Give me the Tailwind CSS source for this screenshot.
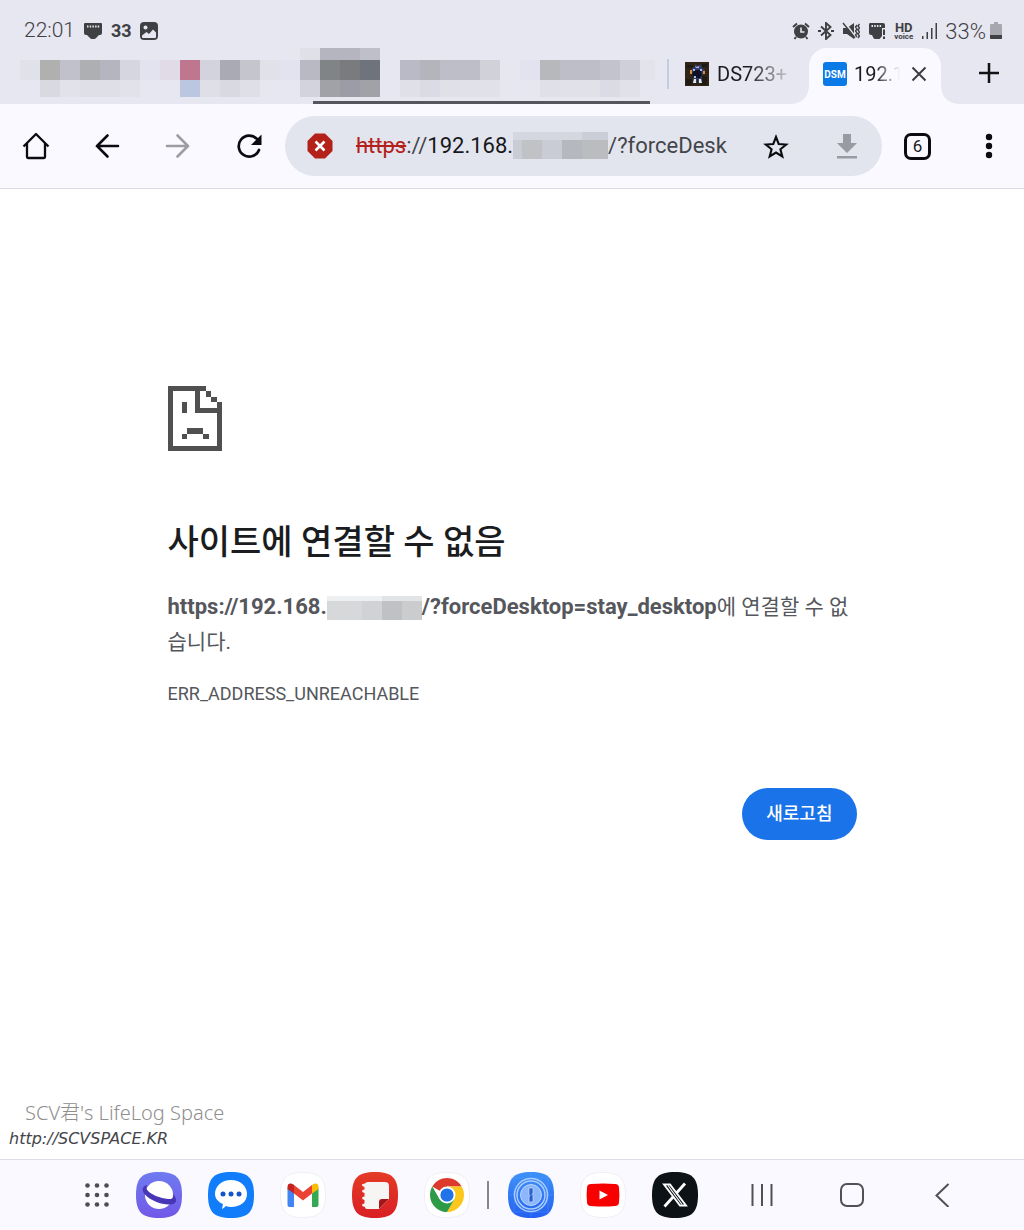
<!doctype html>
<html lang="ko">
<head>
  <meta charset="UTF-8" />
  <meta name="viewport" content="width=device-width, initial-scale=1" />
  <script src="https://cdn.jsdelivr.net/npm/@tailwindcss/browser@4"></script>
  <title>사이트에 연결할 수 없음</title>
</head>
<body class="min-h-screen flex flex-col bg-white text-[#1b1c20] font-[Roboto,'Noto_Sans_CJK_KR',sans-serif]">

  <!-- Status bar -->
  <div class="h-12 pt-[14px] pl-6 pr-[22px] flex items-center justify-between bg-[#e6e7f0] text-[#3f4043]">
    <div class="flex items-center gap-2">
      <span class="text-[21px] font-light">22:01</span>
      <svg class="w-5 h-5" viewBox="0 0 20 20" fill="currentColor"><path fill-rule="evenodd" d="M2 2h16a1 1 0 0 1 1 1v9q0 2-2 2h-1l-3 3q-.600 1-2 1H9q-1.400 0-2-1l-3-3H3q-2 0-2-2V3a1 1 0 0 1 1-1Zm2 2.500v2h1.500v-2Zm2.700 0v2h1.500v-2Zm2.700 0v2h1.500v-2Zm2.700 0v2h1.500v-2Zm2.600 0v2h1.500v-2Z"/></svg>
      <span class="text-lg leading-5 font-bold">33</span>
      <svg class="w-[18px] h-[18px]" viewBox="0 0 18 18"><rect width="18" height="18" rx="4" fill="currentColor"/><circle cx="5.500" cy="5.500" r="2" fill="#e6e7f0"/><path d="M2 13.500 6.500 10l2.500 2 4-4.500 3 3V15q0 1-1 1H3q-1 0-1-1Z" fill="#e6e7f0"/></svg>
    </div>
    <div class="flex items-center gap-2">
      <!-- alarm -->
      <svg class="w-[18px] h-[18px]" viewBox="0 0 18 18"><circle cx="9" cy="9.500" r="7" fill="currentColor"/><path d="M1 5 5 1.500M17 5l-4-3.500M4 15l-1.500 2M14 15l1.500 2" stroke="currentColor" stroke-width="2"/><path d="M9 5.500V10h3.500" fill="none" stroke="#e6e7f0" stroke-width="1.600"/></svg>
      <!-- bluetooth -->
      <svg class="w-4 h-[18px]" viewBox="0 0 16 18" fill="none" stroke="currentColor" stroke-width="1.900"><path d="m3 4.500 9.500 8.500L8 17V1l4.500 4L3 13.500"/><path d="M0 9h3M13 9h3" stroke-width="2.200"/></svg>
      <!-- muted -->
      <svg class="w-[18px] h-[18px]" viewBox="0 0 18 18"><path d="M1 6h4l7-5v16l-7-5H1Z" fill="currentColor"/><path d="M2.500 0 14 15.500" stroke="#e6e7f0" stroke-width="1.600"/><path d="m1 1 12 15M15 3l-1.500 2L15 7l-1.500 2 1.500 2-1.500 2 1.500 2M17.500 2 16 4l1.500 2L16 8l1.500 2-1.500 2 1.500 2-1.500 2" fill="none" stroke="currentColor" stroke-width="1.400"/></svg>
      <!-- ethernet -->
      <svg class="w-[18px] h-[18px]" viewBox="0 0 18 18" fill="currentColor"><path fill-rule="evenodd" d="M2 1h13q2 0 2 2v3h-3v8l-2 2.500q-.500.500-1 .500H7q-1 0-1.500-1L4 13H3q-2 0-2-2V2.500Q1 1 2 1Zm1.500 2v2H5V3Zm2.700 0v2h1.500V3Zm2.700 0v2h1.500V3Zm2.700 0v2h1.500V3Z"/><path d="M15 7.500h2V13h-2zM15 14.500h2V17h-2z"/></svg>
      <div class="flex flex-col items-center font-bold">
        <span class="text-[13px] leading-[11px]">HD</span>
        <span class="text-[8px] leading-[7px]">voice</span>
      </div>
      <div class="flex items-center gap-1">
        <svg class="w-5 h-[18px]" viewBox="0 0 20 18" fill="currentColor"><path d="M1 14h1.500v3H1zM5.500 10H7v7H5.500zM10 6h1.500v11H10zM14.500 1H16v16h-1.500z"/></svg>
        <span class="text-[22px] font-light">33%</span>
        <svg class="w-3 h-[18px]" viewBox="0 0 12 18"><path d="M4 0h4v2h3q1 0 1 1v13q0 1-1 1H1q-1 0-1-1V3q0-1 1-1h3Z" fill="#a7a7af"/><path d="M0 13h12v3q0 1-1 1H1q-1 0-1-1Z" fill="#3f4043"/></svg>
      </div>
    </div>
  </div>

  <!-- Tab strip -->
  <div class="h-14 flex bg-[#e6e7f0] overflow-hidden">
    <!-- masked tabs -->
    <svg class="flex-none w-[667px] h-14" viewBox="0 0 667 56" shape-rendering="crispEdges">
      <path fill="#e1e2e9" d="M20 12h20v20H20zM260 12h20v20h-20z"/>
      <path fill="#b0b1ae" d="M40 12h20v20H40z"/>
      <path fill="#c1c1cb" d="M60 12h20v20H60z"/>
      <path fill="#adafb3" d="M80 12h20v20H80z"/>
      <path fill="#b4b5bf" d="M100 12h20v20h-20z"/>
      <path fill="#d5d6df" d="M120 12h20v20h-20z"/>
      <path fill="#e2e3ee" d="M140 12h20v20h-20zM280 12h20v20h-20zM520 12h20v20h-20z"/>
      <path fill="#e1dbe7" d="M160 12h20v20h-20z"/>
      <path fill="#bf768f" d="M180 12h20v20h-20z"/>
      <path fill="#d2d3dc" d="M200 12h20v20h-20z"/>
      <path fill="#a9aab3" d="M220 12h20v20h-20z"/>
      <path fill="#c5c6cd" d="M240 12h20v20h-20z"/>
      <path fill="#d9dae1" d="M40 32h20v17H40zM220 32h20v17h-20z"/>
      <path fill="#dfdfe7" d="M80 32h40v17H80zM200 32h20v17h-20zM240 32h20v17h-20z"/>
      <path fill="#e2e2ea" d="M60 32h20v17H60zM120 32h20v17h-20z"/>
      <path fill="#bbc7e1" d="M180 32h20v17h-20z"/>
      <path fill="#dfe0e8" d="M300 0h20v12h-20z"/>
      <path fill="#b4b5be" d="M320 0h40v12h-40z"/>
      <path fill="#bebfc9" d="M360 0h20v12h-20z"/>
      <path fill="#b8b9c3" d="M300 12h20v20h-20z"/>
      <path fill="#808487" d="M320 12h20v20h-20z"/>
      <path fill="#7a7b7f" d="M340 12h20v20h-20z"/>
      <path fill="#6f737b" d="M360 12h20v20h-20z"/>
      <path fill="#d2d3dd" d="M300 32h20v17h-20z"/>
      <path fill="#a1a1a8" d="M320 32h20v17h-20zM360 32h20v17h-20z"/>
      <path fill="#9c9ca7" d="M340 32h20v17h-20z"/>
      <path fill="#babac6" d="M400 12h20v20h-20z"/>
      <path fill="#b3b4bc" d="M420 12h20v20h-20z"/>
      <path fill="#bdbec8" d="M440 12h40v20h-40zM560 12h40v20h-40z"/>
      <path fill="#d1d2d9" d="M480 12h20v20h-20z"/>
      <path fill="#dfe0e8" d="M400 32h20v17h-20zM440 32h20v17h-20zM540 32h20v17h-20z"/>
      <path fill="#dadbe4" d="M420 32h20v17h-20zM600 32h20v17h-20z"/>
      <path fill="#e1e2e9" d="M460 32h40v17h-40zM560 32h40v17h-40zM620 32h20v17h-20z"/>
      <path fill="#b7b8bc" d="M540 12h20v20h-20z"/>
      <path fill="#c2c3cd" d="M600 12h20v20h-20z"/>
      <path fill="#cecfd8" d="M620 12h20v20h-20z"/>
      <path fill="#e3e4eb" d="M640 12h15v20h-15z"/>
      <path fill="#55565d" d="M313 53h337v3H313z"/>
    </svg>
    <button class="flex-none w-[142px] h-[52px] flex items-center text-left">
      <span class="flex-none w-[2px] h-[30px] bg-[#c3cde0]"></span>
      <svg class="ml-4 flex-none w-6 h-6" viewBox="0 0 24 24"><path fill="#302416" d="M0 0h24v24H0z"/><path fill="#201b12" d="M2 3h6v3H2zM16 14h6v9h-6zM1 17h6v6H1zM17 2h5v3h-5z"/><path fill="#303e68" d="m10 2 3 2 3-2 1 4 3 2v4l-3 1v8h-4v-4h-1v4H8v-7l-2-3 1-5 3-1Z"/><path fill="#0e1127" d="M9 8h7l1 5-2 3H9l-2-4Z"/><path fill="#a9b9e3" d="m10 4 2 1 2-1v2h-3ZM8 7h2v2H8zM15 7h2v2h-2zM9 14h2v2H9z"/><path fill="#e7e8ef" d="M9 17h2v4H8zM14 17h2l1 4h-3z"/><path fill="#e18a36" d="M5 8h2v4H5zM18 9h2v3h-2z"/></svg>
      <span class="ml-2 w-[70px] overflow-hidden whitespace-nowrap text-[20px] [mask-image:linear-gradient(to_right,black_45%,transparent_110%)]">DS723+</span>
    </button>
    <div class="relative flex-none w-[132px] h-14 pb-1 pl-[14px] pr-[13px] flex items-center rounded-t-[18px] bg-[#faf9ff]">
      <svg class="absolute -left-5 bottom-0 w-5 h-5" viewBox="0 0 20 20"><path d="M0 20Q20 20 20 0v20Z" fill="#faf9ff"/></svg>
      <svg class="absolute -right-5 bottom-0 w-5 h-5" viewBox="0 0 20 20"><path d="M20 20Q0 20 0 0v20Z" fill="#faf9ff"/></svg>
      <span class="flex-none w-6 h-6 rounded-[3px] bg-[#0a7ae6] text-white text-[10px] font-bold flex items-center justify-center">DSM</span>
      <span class="ml-[7px] w-[46px] overflow-hidden whitespace-nowrap text-[20px] [mask-image:linear-gradient(to_right,black_45%,transparent)]">192.16</span>
      <button class="ml-auto" aria-label="탭 닫기">
        <svg class="w-[18px] h-[18px]" viewBox="0 0 18 18" stroke="#3c3d42" stroke-width="2"><path d="m2.500 2.500 13 13M15.500 2.500l-13 13"/></svg>
      </button>
    </div>
    <button class="ml-auto w-[71px] h-[50px] flex items-center justify-center" aria-label="새 탭">
      <svg class="w-5 h-5" viewBox="0 0 20 20" stroke="#111215" stroke-width="2.500"><path d="M10 0v20M0 10h20"/></svg>
    </button>
  </div>

  <!-- Toolbar -->
  <header class="h-[85px] flex items-center bg-[#faf9ff] border-b border-[#dcdce4]">
    <button class="flex-none w-[71px] flex justify-center" aria-label="홈">
      <svg class="w-7 h-7" viewBox="0 0 28 28" fill="none" stroke="#0b0c0f" stroke-width="2.300" stroke-linejoin="round"><path d="M1.500 14.500 14 2l12.500 12.500M5 11.500V25q0 1 1 1h16q1 0 1-1V11.500"/></svg>
    </button>
    <button class="flex-none w-[71px] flex justify-center" aria-label="뒤로">
      <svg class="w-7 h-7" viewBox="0 0 28 28" fill="none" stroke="#0b0c0f" stroke-width="2.600" stroke-linecap="round"><path d="M25 14H4M14.500 3.500 4 14l10.500 10.500"/></svg>
    </button>
    <button class="flex-none w-[71px] flex justify-center" aria-label="앞으로">
      <svg class="w-7 h-7" viewBox="0 0 28 28" fill="none" stroke="#9c9ca1" stroke-width="2.600" stroke-linecap="round"><path d="M3 14h21M13.500 3.500 24 14 13.500 24.500"/></svg>
    </button>
    <button class="flex-none w-[71px] flex justify-center" aria-label="새로고침">
      <svg class="w-7 h-7" viewBox="0 0 28 28"><path d="M24 18A10.500 10.500 0 1 1 22 7" fill="none" stroke="#0b0c0f" stroke-width="2.700" stroke-linecap="round"/><path d="M26.500 2.500V13H16Z" fill="#0b0c0f"/></svg>
    </button>
    <div class="flex-1 min-w-0 h-[60px] ml-px pl-[22px] flex items-center rounded-full bg-[#e2e5ee]">
      <svg class="flex-none w-[26px] h-[26px]" viewBox="0 0 26 26"><path d="M8 .500h10L25.500 8v10L18 25.500H8L.500 18V8Z" fill="#b3211a"/><path d="m8.500 8.500 9 9M17.500 8.500l-9 9" stroke="#fff" stroke-width="2.600"/></svg>
      <div role="textbox" aria-label="주소" contenteditable="true" class="flex-1 min-w-0 ml-[23px] mr-3 flex items-center overflow-hidden whitespace-nowrap text-[22px] leading-8 text-[#43454b]"><s class="text-[#b3211a]">https</s><span>://</span><span class="text-[#17181b]">192.168.</span><svg class="flex-none w-[95px] h-8" viewBox="0 0 95 32" shape-rendering="crispEdges"><path fill="#d4d7df" d="M0 2h69v8H0z"/><path fill="#cbced6" d="M69 2h26v8H69z"/><path fill="#c9ccd4" d="M0 10h9v19H0zM29 10h20v19H29z"/><path fill="#c1c2c5" d="M9 10h20v19H9z"/><path fill="#b6b8bf" d="M49 10h20v19H49z"/><path fill="#bbbcc0" d="M69 10h26v19H69z"/></svg><span>/?forceDesk</span></div>
      <button class="flex-none w-[71px] flex justify-center" aria-label="북마크">
        <svg class="w-7 h-7" viewBox="0 0 28 28" fill="none" stroke="#0b0c0f" stroke-width="2.100"><path d="m14 5 2.700 7 7.500.500-5.800 4.800 1.900 7.200-6.300-4-6.300 4 1.900-7.200-5.800-4.800 7.500-.500Z"/></svg>
      </button>
      <button class="flex-none w-[71px] flex justify-center" aria-label="다운로드">
        <svg class="w-7 h-7" viewBox="0 0 28 28" fill="#989ba2"><path d="M10 2h8v9h6l-10 10L4 11h6ZM4 24h20v2.500H4z"/></svg>
      </button>
    </div>
    <button class="flex-none w-[71px] flex justify-center" aria-label="탭 6개">
      <span class="w-[27px] h-[27px] rounded-[7px] border-[3px] border-[#0b0c0f] flex items-center justify-center text-[17px] leading-5">6</span>
    </button>
    <button class="flex-none w-[71px] flex justify-center" aria-label="메뉴">
      <svg class="w-7 h-7" viewBox="0 0 28 28" fill="#0b0c0f"><circle cx="14" cy="5" r="3.200"/><circle cx="14" cy="14" r="3.200"/><circle cx="14" cy="23" r="3.200"/></svg>
    </button>
  </header>

  <!-- Error page -->
  <main class="flex-1 flex flex-col justify-between">
    <div class="w-full max-w-[689px] mx-auto pt-[197px]">
      <svg class="w-[54px] h-[65px]" viewBox="0 0 10 12" preserveAspectRatio="none" fill="#505050" shape-rendering="crispEdges"><path d="M0 0h7v1h1v1h1v1h1v9H0ZM1 1v10h8V5H5V1ZM6 1v3h3V3H8V2H7V1ZM2.500 3h1v2h-1zM3.500 7.800h3v1h-3zM2.500 8.800h1v1h-1zM6.500 8.800h1v1h-1z" fill-rule="evenodd"/></svg>
      <h1 class="mt-[67px] text-[34px] leading-[48px] font-medium text-[#1b1c20]">사이트에 연결할 수 없음</h1>
      <p class="mt-[23px] text-[21px] leading-[35px] text-[#55575c]"><strong class="text-[22px] font-bold">https://192.168.</strong><svg class="inline-block align-middle w-[95px] h-6" viewBox="0 0 95 24" shape-rendering="crispEdges"><path fill="#eeeff0" d="M0 0h55v5H0z"/><path fill="#e3e4e6" d="M55 0h40v5H55z"/><path fill="#d6d8da" d="M0 5h35v19H0z"/><path fill="#d0d2d5" d="M35 5h20v19H35z"/><path fill="#c0c1c4" d="M55 5h20v19H55z"/><path fill="#caccce" d="M75 5h20v19H75z"/></svg><strong class="text-[22px] font-bold">/?forceDesktop=stay_desktop</strong>에 연결할 수 없습니다.</p>
      <p class="mt-[22px] text-lg leading-6 text-[#55575c]">ERR_ADDRESS_UNREACHABLE</p>
      <div class="mt-[82px] flex justify-end">
        <button class="h-[52px] px-6 rounded-full bg-[#1a73e8] text-white text-lg font-medium">새로고침</button>
      </div>
    </div>
    <div class="pl-[9px] pb-2">
      <div class="pl-4 text-[20px] leading-7 text-[#8f8f8f] font-['Noto_Sans','Noto_Sans_CJK_KR',sans-serif] font-light">SCV君's LifeLog Space</div>
      <a href="http://SCVSPACE.KR" class="block text-base leading-6 italic font-extralight text-[#44454a] font-['DejaVu_Sans',sans-serif]">http://SCVSPACE.KR</a>
    </div>
  </main>

  <!-- Taskbar -->
  <footer class="h-[71px] pl-[84px] flex items-center border-t border-[#dcdce6] bg-[#faf9ff]">
    <button class="flex-none" aria-label="앱 목록">
      <svg class="w-[26px] h-[26px]" viewBox="0 0 26 26" fill="#4d4e52"><circle cx="3.500" cy="3.500" r="2.300"/><circle cx="13" cy="3.500" r="2.300"/><circle cx="22.500" cy="3.500" r="2.300"/><circle cx="3.500" cy="13" r="2.300"/><circle cx="13" cy="13" r="2.300"/><circle cx="22.500" cy="13" r="2.300"/><circle cx="3.500" cy="22.500" r="2.300"/><circle cx="13" cy="22.500" r="2.300"/><circle cx="22.500" cy="22.500" r="2.300"/></svg>
    </button>
    <div class="ml-[26px] flex gap-[26px]">
      <button aria-label="삼성 인터넷">
        <svg class="w-[46px] h-[46px]" viewBox="0 0 46 46"><defs><linearGradient id="si" x2="0" y2="1"><stop stop-color="#6f7bf0"/><stop offset="1" stop-color="#7158e8"/></linearGradient></defs><path d="M0 23C0 6 6 0 23 0s23 6 23 23-6 23-23 23S0 40 0 23Z" fill="url(#si)"/><circle cx="23" cy="23" r="14" fill="#fff"/><path d="M11 13c-6 2-5 6-2 9.500C15 29 26 33 34 32.500c7-.500 8-5 3-10.500 1 4-1 5.500-5 5-8-1-16-4-20-8-2-2-2-4-1-6Z" fill="#4936b6"/></svg>
      </button>
      <button aria-label="메시지">
        <svg class="w-[46px] h-[46px]" viewBox="0 0 46 46"><path d="M0 23C0 6 6 0 23 0s23 6 23 23-6 23-23 23S0 40 0 23Z" fill="#127dfa"/><path d="M23 8c9 0 16 6 16 14s-7 13-16 13q-3 0-5-1-2 2-4 3l1-5c-5-2-8-6-8-10C7 14 14 8 23 8Z" fill="#fff"/><g fill="#1554c9"><circle cx="15" cy="22" r="2.500"/><circle cx="23" cy="22" r="2.500"/><circle cx="31" cy="22" r="2.500"/></g></svg>
      </button>
      <button aria-label="Gmail">
        <svg class="w-[46px] h-[46px]" viewBox="0 0 46 46"><path d="M.5 23C.5 6.500 6.500.5 23 .5S45.500 6.500 45.500 23 39.500 45.500 23 45.500.5 39.500.5 23Z" fill="#fff" stroke="#efeff3"/><path d="M7.500 16v17q0 2 2 2H14V20Z" fill="#4285f4"/><path d="M38.500 16v17q0 2-2 2H32V20Z" fill="#34a853"/><path d="m14 13 9 7 9-7v8.500l-9 7-9-7Z" fill="#ea4335"/><path d="M7.500 17v-2c0-4 3.500-4.500 6.500-2v8.500L7.500 17Z" fill="#c5221f"/><path d="M38.500 17v-2c0-4-3.500-4.500-6.500-2v8.500l6.500-4.500Z" fill="#fbbc04"/></svg>
      </button>
      <button aria-label="삼성 노트">
        <svg class="w-[46px] h-[46px]" viewBox="0 0 46 46"><defs><linearGradient id="sn" x2="0" y2="1"><stop stop-color="#e43b26"/><stop offset="1" stop-color="#d91f25"/></linearGradient></defs><path d="M0 23C0 6 6 0 23 0s23 6 23 23-6 23-23 23S0 40 0 23Z" fill="url(#sn)"/><path d="M16 10h17q4 0 4 4v13l-10 10H16q-3 0-3-2-3-.500-3-2t2.500-1.500V28Q10 27.500 10 26t2.500-1.500V21Q10 20.500 10 19t2.500-1.500V15Q10 14.500 10 13t3-1.500Q13.500 10 16 10Z" fill="#f7f5f3"/><path d="M27 37V30q0-3 3-3h7Z" fill="#a5161b"/></svg>
      </button>
      <button aria-label="Chrome">
        <svg class="w-[46px] h-[46px]" viewBox="0 0 46 46"><path d="M.5 23C.5 6.500 6.500.5 23 .5S45.500 6.500 45.500 23 39.500 45.500 23 45.500.5 39.500.5 23Z" fill="#fff" stroke="#efeff3"/><path d="M23 23 8.300 14.500A17 17 0 0 1 37.700 14.500H23Z" fill="#db3a2c"/><path d="M23 14.500h14.700A17 17 0 0 1 23 40l7.400-12.700L23 23Z" fill="#fcc61b"/><path d="M8.300 14.500A17 17 0 0 0 23 40l7.400-12.700H15.600Z" fill="#2d9a47"/><circle cx="23" cy="23" r="8.500" fill="#fff"/><circle cx="23" cy="23" r="6.600" fill="#2173e8"/></svg>
      </button>
    </div>
    <span class="flex-none ml-[17px] w-[2px] h-7 bg-[#86878c]"></span>
    <div class="ml-[19px] flex gap-[26px]">
      <button aria-label="1Password">
        <svg class="w-[46px] h-[46px]" viewBox="0 0 46 46"><defs><linearGradient id="op" x2="0" y2="1"><stop stop-color="#3d91f8"/><stop offset="1" stop-color="#2460f1"/></linearGradient></defs><path d="M0 23C0 6 6 0 23 0s23 6 23 23-6 23-23 23S0 40 0 23Z" fill="url(#op)"/><path d="M23 0v46M0 23h46M6 3v40M40 3v40M3 6h40M3 40h40" stroke="#6aa4fb" stroke-width=".5" opacity=".5"/><g fill="none" stroke="#a9cdff"><circle cx="23" cy="23" r="16.500" stroke-width="1.500"/><circle cx="23" cy="23" r="14" stroke-width="1.500"/></g><circle cx="23" cy="23" r="10.500" fill="#8cb7fb" stroke="#b9d6ff"/><path d="M21 16h4v5l-1 1.500 1 1V30h-4v-5l1-1.500-1-1Z" fill="#2b5fcb" stroke="#c7ddff" stroke-width=".7"/></svg>
      </button>
      <button aria-label="YouTube">
        <svg class="w-[46px] h-[46px]" viewBox="0 0 46 46"><path d="M.5 23C.5 6.500 6.500.5 23 .5S45.500 6.500 45.500 23 39.500 45.500 23 45.500.5 39.500.5 23Z" fill="#fff" stroke="#efeff3"/><path d="M11 12q12-1 24 0 4 0 4 4 .800 7 0 14 0 4-4 4-12 1-24 0-4 0-4-4-.800-7 0-14 0-4 4-4Z" fill="#f90000"/><path d="m19.500 18.500 8.500 4.500-8.500 4.500Z" fill="#fff"/></svg>
      </button>
      <button aria-label="X">
        <svg class="w-[46px] h-[46px]" viewBox="0 0 46 46"><path d="M0 23C0 6 6 0 23 0s23 6 23 23-6 23-23 23S0 40 0 23Z" fill="#0c1216"/><path d="m12 12.500 16 21h6l-16-21Z" fill="none" stroke="#fff" stroke-width="1.900"/><path d="m16 13.500 14 19" stroke="#fff" stroke-width="1.200"/><path d="m33 11.500-8.500 9.500M21 25l-8.500 9.500" stroke="#fff" stroke-width="2.800"/></svg>
      </button>
    </div>
    <nav class="ml-[19px] flex">
      <button class="w-[90px] flex justify-center" aria-label="최근 앱">
        <svg class="w-6 h-6" viewBox="0 0 24 24" stroke="#505155" stroke-width="2"><path d="M2.500 1v22M12 1v22M21.500 1v22"/></svg>
      </button>
      <button class="w-[90px] flex justify-center" aria-label="홈 화면">
        <svg class="w-6 h-6" viewBox="0 0 24 24" fill="none" stroke="#505155" stroke-width="2"><rect x="1" y="1" width="22" height="22" rx="6"/></svg>
      </button>
      <button class="w-[90px] flex justify-center" aria-label="뒤로 가기">
        <svg class="w-6 h-6" viewBox="0 0 24 24" fill="none" stroke="#505155" stroke-width="2"><path d="M18.500 1 6.500 12.500 18.500 24"/></svg>
      </button>
    </nav>
  </footer>
</body>
</html>
